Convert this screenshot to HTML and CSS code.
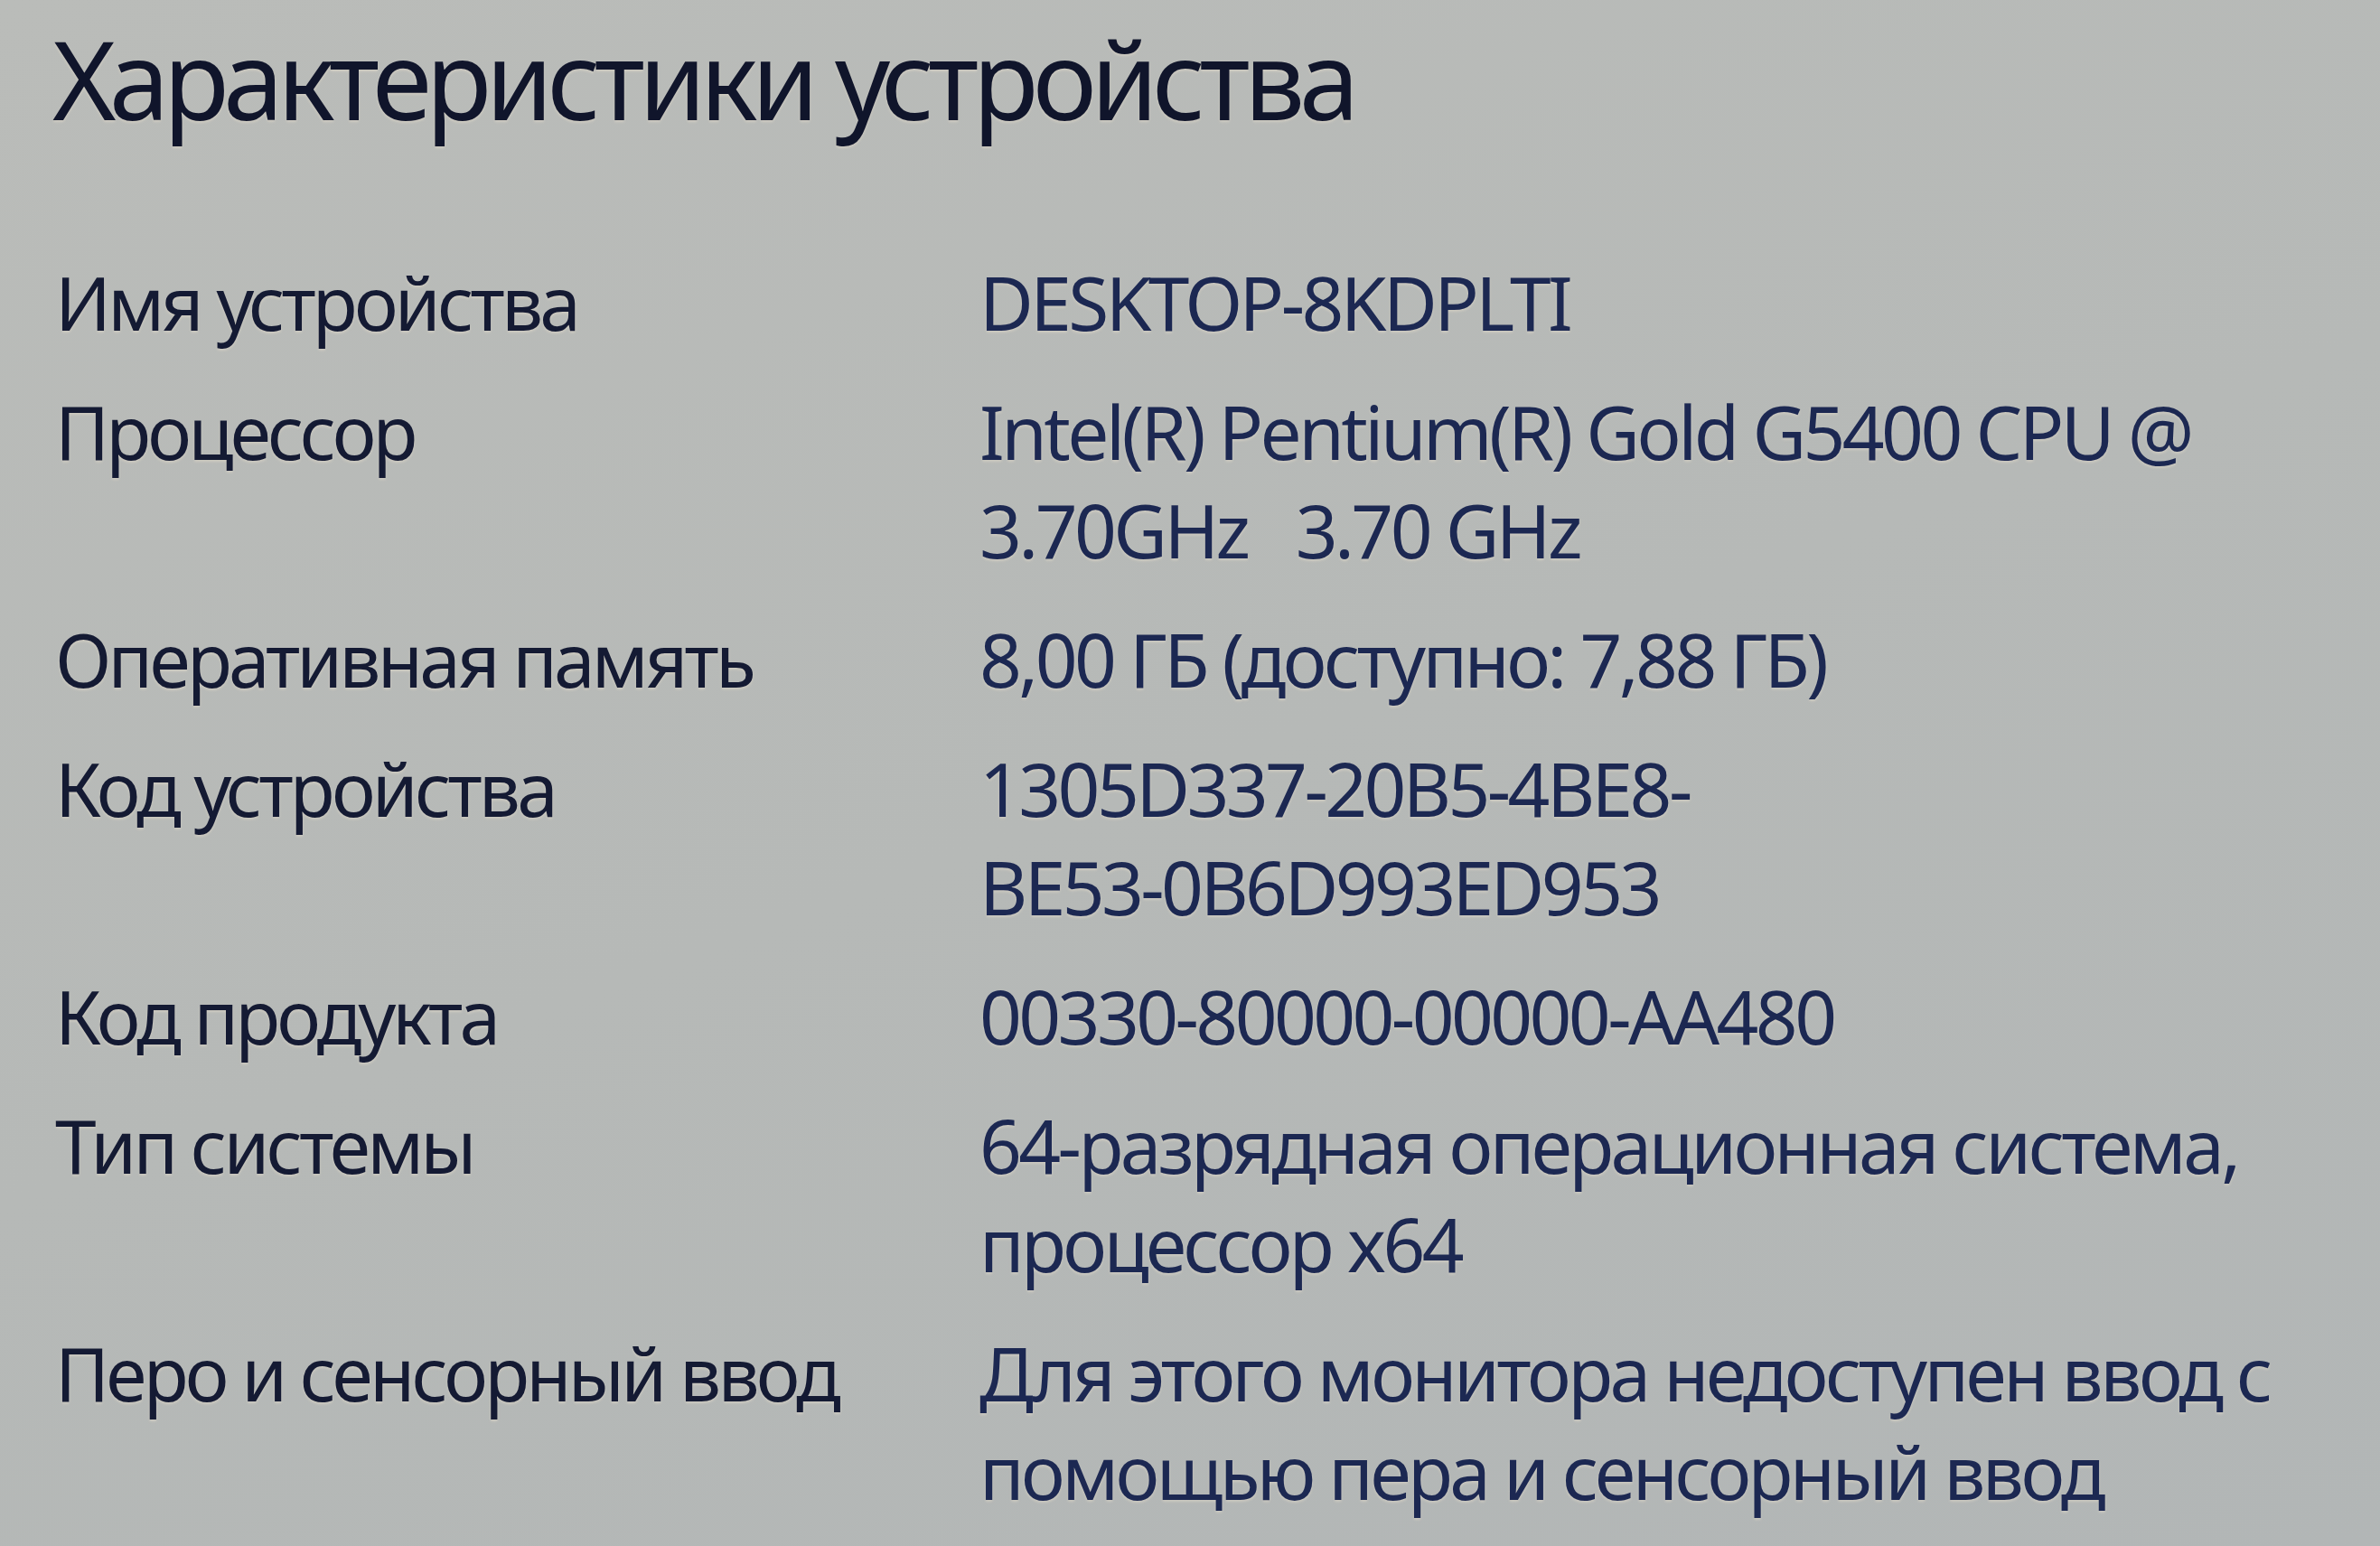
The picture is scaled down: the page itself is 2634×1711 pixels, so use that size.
FILE: index.html
```html
<!DOCTYPE html>
<html lang="ru">
<head>
<meta charset="utf-8">
<title>Характеристики устройства</title>
<link rel="stylesheet" href="styles.css">
</head>
<body>
<main class="page">
  <h1 class="title">Характеристики устройства</h1>
  <dl class="specs">
    <dt class="label">Имя устройства</dt>
    <dd class="value">DESKTOP-8KDPLTI</dd>
    <dt class="label">Процессор</dt>
    <dd class="value">Intel(R) Pentium(R) Gold G5400 CPU @<br>3.70GHz&nbsp;&nbsp;&nbsp;3.70 GHz</dd>
    <dt class="label">Оперативная память</dt>
    <dd class="value">8,00 ГБ (доступно: 7,88 ГБ)</dd>
    <dt class="label">Код устройства</dt>
    <dd class="value">1305D337-20B5-4BE8-<br>BE53-0B6D993ED953</dd>
    <dt class="label">Код продукта</dt>
    <dd class="value">00330-80000-00000-AA480</dd>
    <dt class="label">Тип системы</dt>
    <dd class="value">64-разрядная операционная система,<br>процессор x64</dd>
    <dt class="label">Перо и сенсорный ввод</dt>
    <dd class="value">Для этого монитора недоступен ввод с<br>помощью пера и сенсорный ввод</dd>
  </dl>
</main>
</body>
</html>
```

FILE: styles.css
```css
html, body {
  margin: 0;
  padding: 0;
}

body {
  width: 2634px;
  height: 1711px;
  overflow: hidden;
  background: linear-gradient(160deg, #babcb9 0%, #b6b9b7 50%, #b2b6b6 100%);
  font-family: "Noto Sans", "Open Sans", sans-serif;
  color: #141a33;
}

.page {
  padding: 17px 0 0 58px;
}

.title {
  margin: 0 0 123px 0;
  font-size: 120px;
  line-height: 140px;
  font-weight: 400;
  color: #10152b;
  letter-spacing: -6.7px;
  text-shadow: 0 2px 3px rgba(235, 225, 205, 0.45);
}

.specs {
  margin: 0;
  display: grid;
  grid-template-columns: 1026px 1fr;
  row-gap: 34px;
  font-size: 82px;
  line-height: 109px;
  text-shadow: 0 2px 3px rgba(235, 225, 205, 0.45);
}

.label {
  margin: 0 0 0 3px;
  color: #141a33;
  letter-spacing: -3.8px;
}

.value {
  margin: 0;
  color: #1c2852;
  letter-spacing: -3.6px;
}
```
